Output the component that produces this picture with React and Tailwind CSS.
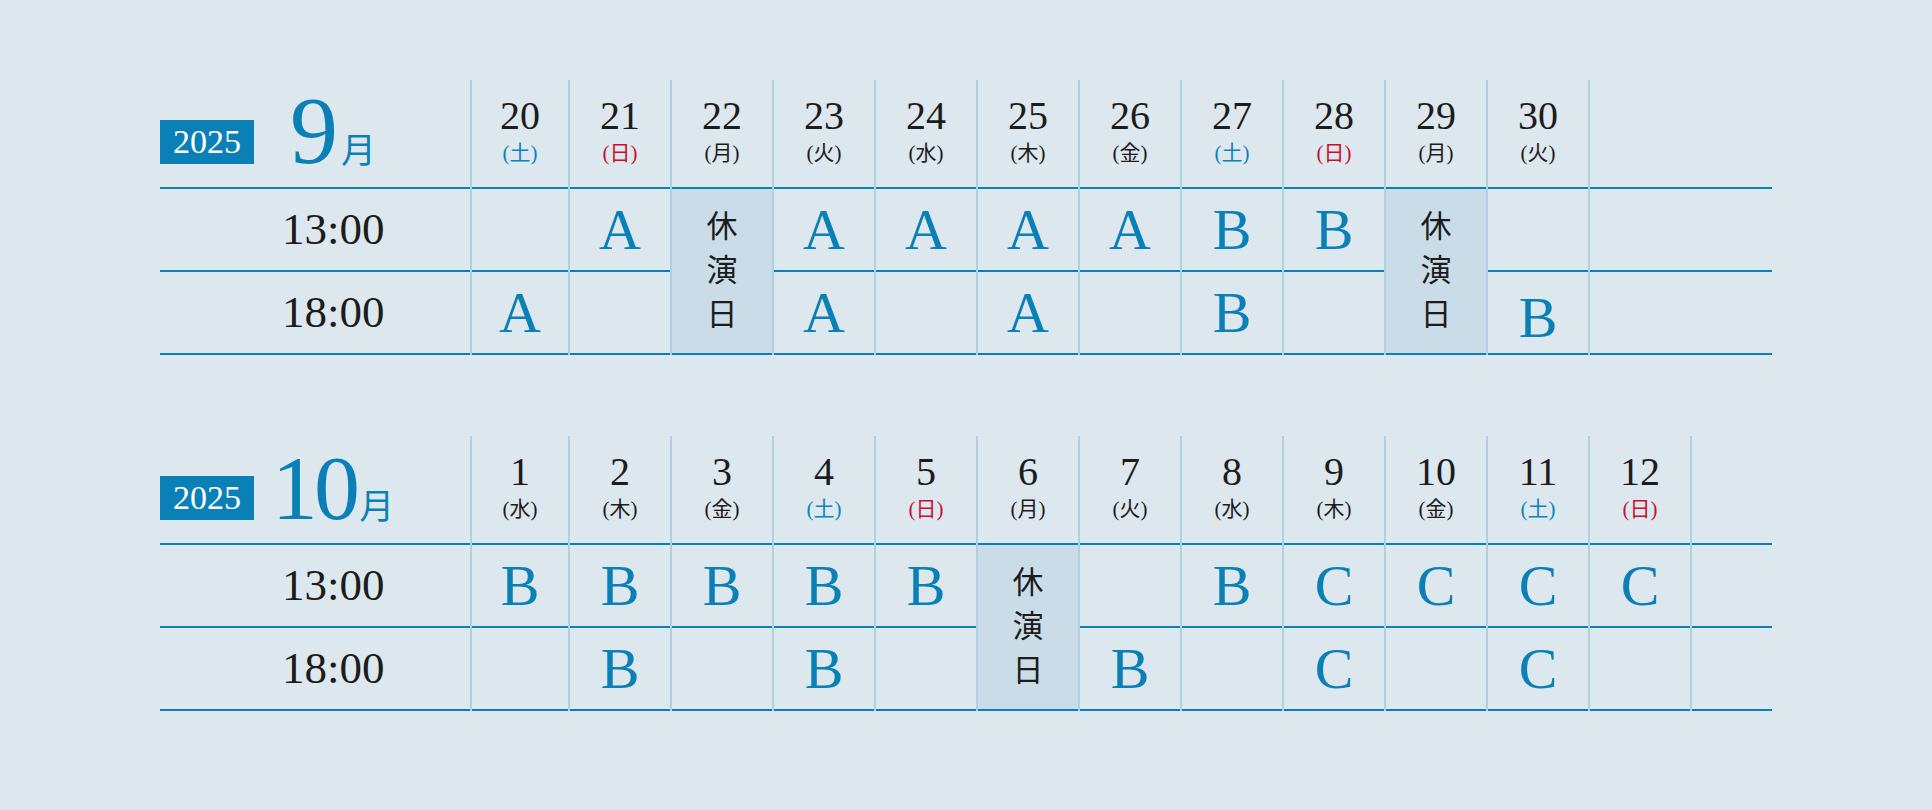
import React from 'react';

// performance schedule: Sep / Oct 2025
const september = [
  { d: 20, wk: '土', r1: '', r2: 'A' },
  { d: 21, wk: '日', r1: 'A', r2: '' },
  { d: 22, wk: '月', rest: true },
  { d: 23, wk: '火', r1: 'A', r2: 'A' },
  { d: 24, wk: '水', r1: 'A', r2: '' },
  { d: 25, wk: '木', r1: 'A', r2: 'A' },
  { d: 26, wk: '金', r1: 'A', r2: '' },
  { d: 27, wk: '土', r1: 'B', r2: 'B' },
  { d: 28, wk: '日', r1: 'B', r2: '' },
  { d: 29, wk: '月', rest: true },
  { d: 30, wk: '火', r1: '', r2: 'B', low: true },
];

const october = [
  { d: 1, wk: '水', r1: 'B', r2: '' },
  { d: 2, wk: '木', r1: 'B', r2: 'B' },
  { d: 3, wk: '金', r1: 'B', r2: '' },
  { d: 4, wk: '土', r1: 'B', r2: 'B' },
  { d: 5, wk: '日', r1: 'B', r2: '' },
  { d: 6, wk: '月', rest: true },
  { d: 7, wk: '火', r1: '', r2: 'B' },
  { d: 8, wk: '水', r1: 'B', r2: '' },
  { d: 9, wk: '木', r1: 'C', r2: 'C' },
  { d: 10, wk: '金', r1: 'C', r2: '' },
  { d: 11, wk: '土', r1: 'C', r2: 'C' },
  { d: 12, wk: '日', r1: 'C', r2: '' },
];

const Divider = () => <div className="w-[2px] h-[275px] bg-[#afd0e0] shrink-0" />;

const Letter = ({ children, low }) => (
  <span className={`text-[58px] leading-none text-[#0b80b7] ${low ? 'mt-[10px]' : ''}`}>{children}</span>
);

const DayColumn = ({ day, first }) => {
  const wkColor =
    day.wk === '土' ? 'text-[#0b84bd]' : day.wk === '日' ? 'text-[#c8102e]' : 'text-[#1c1c1c]';
  return (
    <div className={`${first ? 'w-[96px]' : 'w-[100px]'} shrink-0 flex flex-col`}>
      <div className="h-[107px] flex flex-col items-center pt-[16px]">
        <span className="text-[40px] leading-none text-[#1c1c1c]">{day.d}</span>
        <span className={`mt-[7px] text-[21px] leading-none ${wkColor}`}>({day.wk})</span>
      </div>
      {day.rest ? (
        <div className="h-[168px] border-y-2 border-[#0b80b7] bg-[#c9dce7] flex flex-col items-center justify-center text-[31px] leading-[44px] text-[#1c1c1c]">
          <span>休</span>
          <span>演</span>
          <span>日</span>
        </div>
      ) : (
        <>
          <div className="h-[83px] border-t-2 border-[#0b80b7] flex items-center justify-center">
            <Letter>{day.r1}</Letter>
          </div>
          <div className="h-[85px] border-y-2 border-[#0b80b7] flex items-center justify-center">
            <Letter low={day.low}>{day.r2}</Letter>
          </div>
        </>
      )}
    </div>
  );
};

const MonthTable = ({ month, days, numClass, shiftClass }) => (
  <div className="flex w-[1612px]">
    {/* label column */}
    <div className="w-[310px] shrink-0 flex flex-col">
      <div className="h-[107px] flex items-end pb-[23px]">
        <div className="w-[94px] h-[44px] bg-[#0b80b7] text-white text-[34px] leading-none flex items-center justify-center">
          2025
        </div>
        <div className={`w-[158px] flex justify-center items-baseline text-[#0b80b7] ${shiftClass}`}>
          <span className={`leading-none ${numClass}`}>{month}</span>
          <span className="text-[35px] leading-none ml-[3px]">月</span>
        </div>
      </div>
      <div className="h-[83px] border-t-2 border-[#0b80b7] flex items-center pl-[122px] text-[45px] leading-none text-[#1c1c1c]">
        13:00
      </div>
      <div className="h-[85px] border-y-2 border-[#0b80b7] flex items-center pl-[122px] text-[45px] leading-none text-[#1c1c1c]">
        18:00
      </div>
    </div>

    {days.map((day, i) => (
      <React.Fragment key={day.d}>
        <Divider />
        <DayColumn day={day} first={i === 0} />
      </React.Fragment>
    ))}
    <Divider />

    {/* trailing filler */}
    <div className="flex-1 flex flex-col">
      <div className="h-[107px]" />
      <div className="h-[83px] border-t-2 border-[#0b80b7]" />
      <div className="h-[85px] border-y-2 border-[#0b80b7]" />
    </div>
  </div>
);

export default function App() {
  return (
    <div className="min-h-screen w-full bg-[#dde7ee] pt-[80px] pl-[160px] font-['Liberation_Serif','Noto_Sans_CJK_JP',serif]">
      <MonthTable month="9" days={september} numClass="text-[96px]" shiftClass="mb-[-15px]" />
      <div className="h-[81px]" />
      <MonthTable month="10" days={october} numClass="text-[92px] tracking-[-0.04em]" shiftClass="mb-[-14px]" />
    </div>
  );
}
